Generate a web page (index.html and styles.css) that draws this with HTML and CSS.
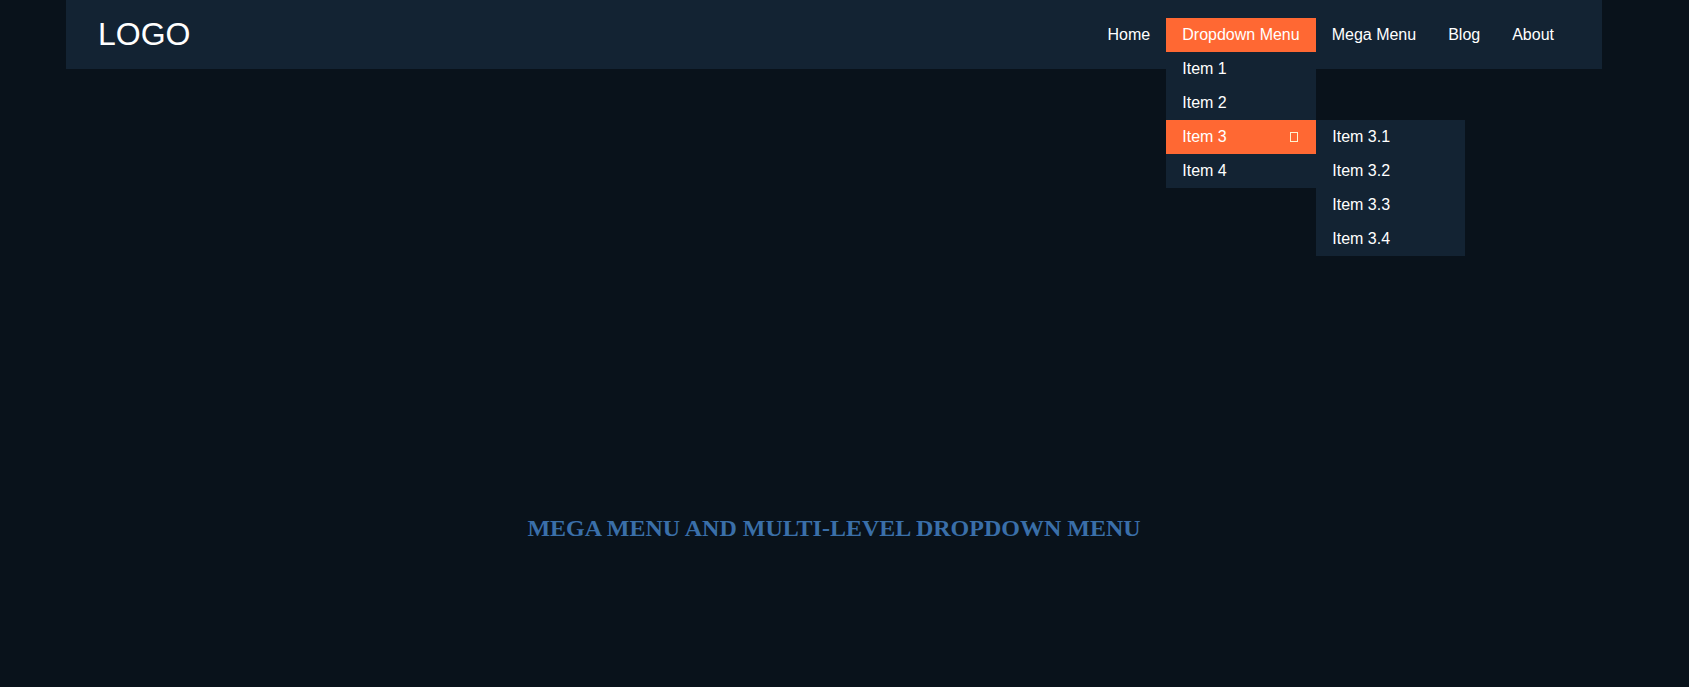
FILE: index.html
```html
<!DOCTYPE html>
<html lang="en">
<head>
<meta charset="utf-8">
<title>Mega Menu and Multi-level Dropdown Menu</title>
<link rel="stylesheet" href="styles.css">
</head>
<body>
<div class="page">
  <header class="header">
    <a class="logo" href="#">LOGO</a>
    <nav>
      <ul class="nav">
        <li class="nav-item"><a class="nav-link" href="#">Home</a></li>
        <li class="nav-item has-drop">
          <a class="nav-link active" href="#">Dropdown Menu</a>
          <ul class="dropdown">
            <li class="drop-item"><a class="drop-link" href="#">Item 1</a></li>
            <li class="drop-item"><a class="drop-link" href="#">Item 2</a></li>
            <li class="drop-item has-sub">
              <a class="drop-link active" href="#"><span>Item 3</span><span class="tofu"></span></a>
              <ul class="dropdown sub">
                <li class="drop-item"><a class="drop-link" href="#">Item 3.1</a></li>
                <li class="drop-item"><a class="drop-link" href="#">Item 3.2</a></li>
                <li class="drop-item"><a class="drop-link" href="#">Item 3.3</a></li>
                <li class="drop-item"><a class="drop-link" href="#">Item 3.4</a></li>
              </ul>
            </li>
            <li class="drop-item"><a class="drop-link" href="#">Item 4</a></li>
          </ul>
        </li>
        <li class="nav-item"><a class="nav-link" href="#">Mega Menu</a></li>
        <li class="nav-item"><a class="nav-link" href="#">Blog</a></li>
        <li class="nav-item"><a class="nav-link" href="#">About</a></li>
      </ul>
    </nav>
  </header>
  <main class="main">
    <h2 class="title">MEGA MENU AND MULTI-LEVEL DROPDOWN MENU</h2>
  </main>
</div>
</body>
</html>
```
FILE: styles.css
```css
* { box-sizing: border-box; }
html, body { margin: 0; padding: 0; }
body {
  background: #09121b;
  font-family: "Liberation Sans", Arial, sans-serif;
  color: #fff;
  font-size: 16px;
  height: 687px;
  overflow: hidden;
}
.page { width: 1668px; }
.header {
  width: 1536px;
  margin: 0 auto;
  height: 69px;
  background: #132333;
  padding: 0 32px;
  display: flex;
  align-items: center;
  justify-content: space-between;
}
.logo {
  color: #fff;
  text-decoration: none;
  font-size: 32px;
  line-height: 37px;
}
ul { list-style: none; margin: 0; padding: 0; }
.nav { display: flex; align-items: center; }
.nav-item { position: relative; }
.nav-link {
  display: block;
  color: #fff;
  text-decoration: none;
  padding: 8px 16px;
  line-height: 18px;
}
.active { background: #ff6833; }
.dropdown {
  position: absolute;
  top: 100%;
  left: 0;
  width: 150px;
  background: #132333;
  z-index: 10;
}
.dropdown.sub { top: 0; left: 100%; width: 149px; }
.drop-item { position: relative; }
.drop-link {
  display: flex;
  align-items: center;
  justify-content: space-between;
  color: #fff;
  text-decoration: none;
  padding: 8px 16px;
  line-height: 18px;
}
.tofu {
  display: inline-block;
  width: 8px;
  height: 10px;
  border: 1px solid #fff3d0;
  margin-right: 2px;
}
.main { padding-top: 445px; }
.title {
  margin: 0;
  text-align: center;
  font-family: "Liberation Serif", "Times New Roman", serif;
  font-weight: bold;
  font-size: 24px;
  line-height: 28px;
  color: #3a6fa9;
}
```
